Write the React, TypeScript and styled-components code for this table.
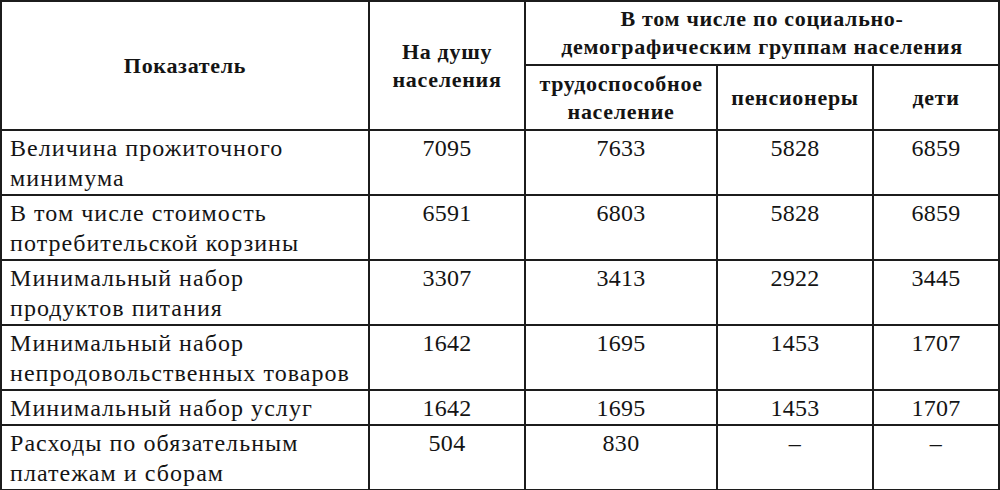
import styled, { createGlobalStyle } from "styled-components";

const GlobalStyle = createGlobalStyle`
  html, body {
    margin: 0;
    padding: 0;
    background: #fff;
  }
  body {
    font-family: "Liberation Serif", "Times New Roman", serif;
    color: #141414;
  }
`;

const serif = `"Liberation Serif", "Times New Roman", serif`;

const Table = styled.table`
  border-collapse: collapse;
  table-layout: fixed;
  width: 998px;
  margin: 0;
  border: 2px solid #2a2a2a;
  font-family: ${serif};
  color: #141414;
`;

const HeadCell = styled.th`
  border: 2px solid #1c1c1c;
  padding: 0 2px;
  font-family: ${serif};
  font-size: 22px;
  line-height: 28px;
  letter-spacing: 0.7px;
  font-weight: 700;
  text-align: center;
  vertical-align: middle;
  white-space: nowrap;
`;

const HeadRow = styled.tr<{ $height: number }>`
  height: ${({ $height }) => $height}px;
`;

const BodyRow = styled.tr<{ $compact?: boolean }>`
  height: ${({ $compact }) => ($compact ? 35 : 65)}px;
`;

const LabelCell = styled.td`
  border: 2px solid #1c1c1c;
  padding: 2px 4px 0 8px;
  font-family: ${serif};
  font-size: 24px;
  line-height: 30px;
  letter-spacing: 1.05px;
  vertical-align: top;
  text-align: left;
  white-space: nowrap;
`;

const ValueCell = styled.td`
  border: 2px solid #1c1c1c;
  padding: 2px 4px 0;
  font-family: ${serif};
  font-size: 24px;
  line-height: 30px;
  letter-spacing: 0.3px;
  vertical-align: top;
  text-align: center;
`;

const rows: { label: [string, string?]; values: string[] }[] = [
  { label: ["Величина прожиточного", "минимума"], values: ["7095", "7633", "5828", "6859"] },
  { label: ["В том числе стоимость", "потребительской корзины"], values: ["6591", "6803", "5828", "6859"] },
  { label: ["Минимальный набор", "продуктов питания"], values: ["3307", "3413", "2922", "3445"] },
  { label: ["Минимальный набор", "непродовольственных товаров"], values: ["1642", "1695", "1453", "1707"] },
  { label: ["Минимальный набор услуг"], values: ["1642", "1695", "1453", "1707"] },
  { label: ["Расходы по обязательным", "платежам и сборам"], values: ["504", "830", "–", "–"] },
];

export default function App() {
  return (
    <>
      <GlobalStyle />
      <Table>
        <colgroup>
          <col style={{ width: 368 }} />
          <col style={{ width: 156 }} />
          <col style={{ width: 192 }} />
          <col style={{ width: 156 }} />
          <col style={{ width: 126 }} />
        </colgroup>
        <thead>
          <HeadRow $height={64}>
            <HeadCell rowSpan={2}>Показатель</HeadCell>
            <HeadCell rowSpan={2}>
              На душу
              <br />
              населения
            </HeadCell>
            <HeadCell colSpan={3}>
              В том числе по социально-
              <br />
              демографическим группам населения
            </HeadCell>
          </HeadRow>
          <HeadRow $height={65}>
            <HeadCell>
              трудоспособное
              <br />
              население
            </HeadCell>
            <HeadCell>пенсионеры</HeadCell>
            <HeadCell>дети</HeadCell>
          </HeadRow>
        </thead>
        <tbody>
          {rows.map((row, i) => (
            <BodyRow key={i} $compact={row.label.length === 1}>
              <LabelCell>
                {row.label[0]}
                {row.label[1] && (
                  <>
                    <br />
                    {row.label[1]}
                  </>
                )}
              </LabelCell>
              {row.values.map((v, j) => (
                <ValueCell key={j}>{v}</ValueCell>
              ))}
            </BodyRow>
          ))}
        </tbody>
      </Table>
    </>
  );
}
